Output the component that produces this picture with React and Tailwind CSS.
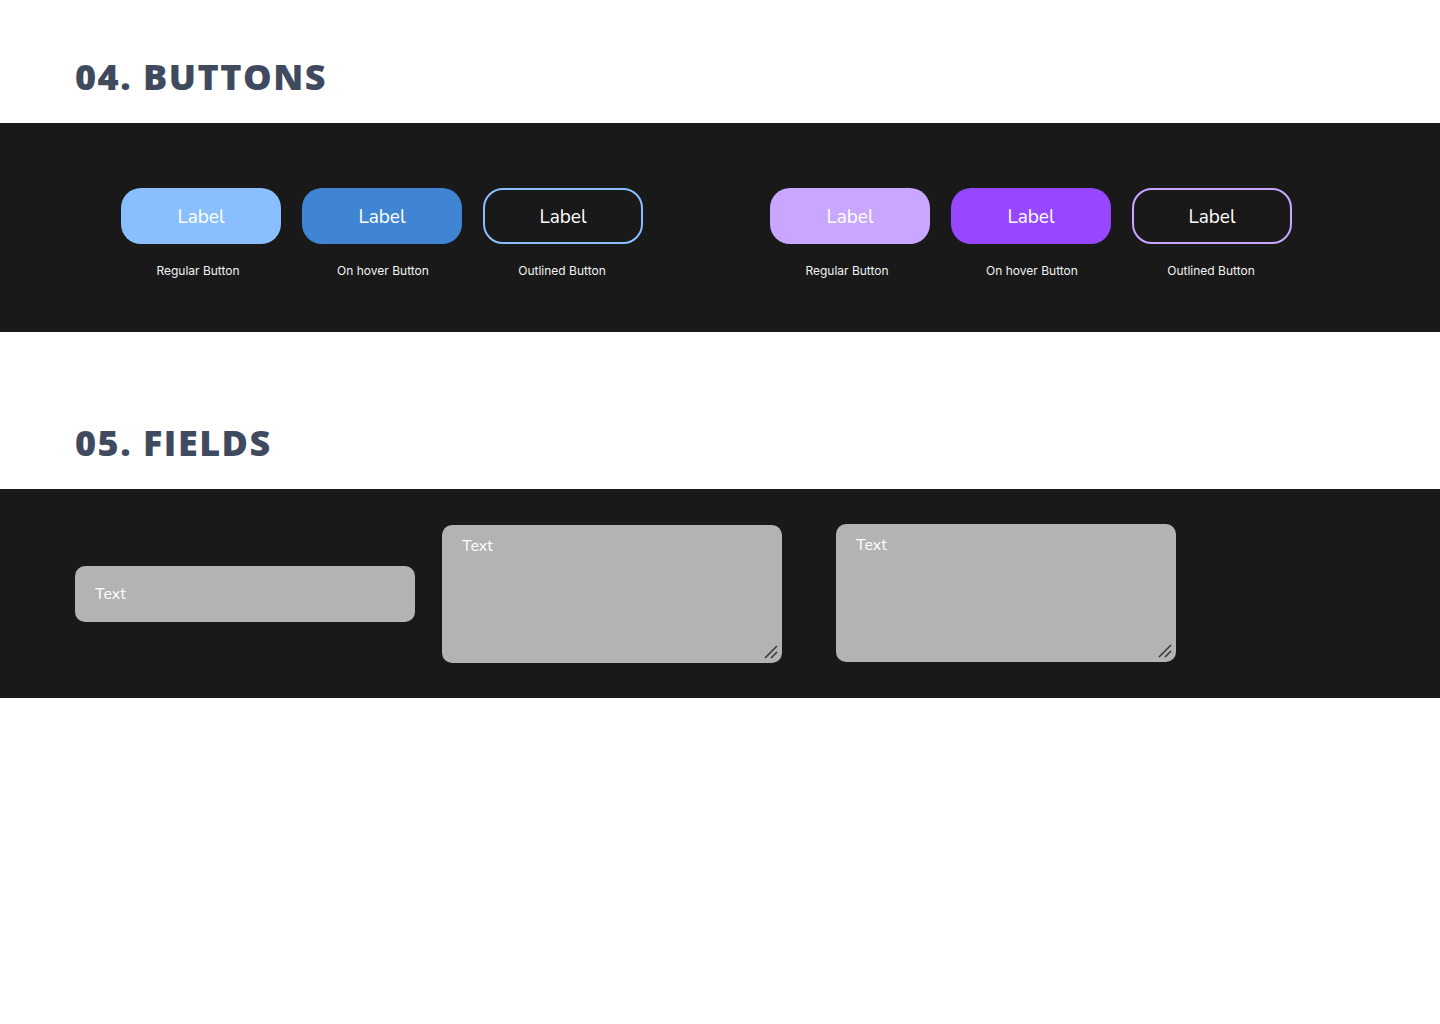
import React from 'react';

const heading = { fontFamily: '"Open Sans", "DejaVu Sans", sans-serif' };
const labelFont = { fontFamily: '"Nunito", "Lato", "Noto Sans", sans-serif' };
const captionFont = { fontFamily: 'Inter, "Noto Sans", sans-serif' };

const ButtonDemo = ({ variant, caption, shift = '' }) => {
  const styles = {
    blueRegular: 'bg-[#89bfff] text-white',
    blueHover: 'bg-[#4085d4] text-white',
    blueOutline: 'border-2 border-[#89bfff] text-white',
    purpleRegular: 'bg-[#c9a6ff] text-white',
    purpleHover: 'bg-[#9747ff] text-white',
    purpleOutline: 'border-2 border-[#c9a6ff] text-white',
  };
  return (
    <div className="flex flex-col items-center w-[160px]">
      <button
        className={`${styles[variant]} w-[160px] h-[56px] rounded-[20px] text-[19px] pt-[2px] flex items-center justify-center`}
        style={labelFont}
      >
        Label
      </button>
      <span className={`mt-[20px] text-[12px] leading-[14px] text-[#f2f2f2] ${shift}`} style={captionFont}>
        {caption}
      </span>
    </div>
  );
};

const ResizeGrip = () => (
  <svg className="absolute right-[4px] bottom-[4px]" width="14" height="14" viewBox="0 0 14 14">
    <line x1="1" y1="13" x2="13" y2="1" stroke="#3a3a3a" strokeWidth="1.6" />
    <line x1="7" y1="13" x2="13" y2="7" stroke="#3a3a3a" strokeWidth="1.6" />
  </svg>
);

const TextArea = ({ offset }) => (
  <div className={offset}>
    <div className="relative w-[340px] h-[138px] rounded-[10px] bg-[#b3b3b3] px-[20px] pt-[8px]">
      <span className="text-white text-[16px]" style={labelFont}>Text</span>
      <ResizeGrip />
    </div>
  </div>
);

const App = () => {
  return (
    <div className="w-[1440px] min-h-[1024px] bg-white">
      {/* Buttons */}
      <div className="h-[123px] px-[75px] flex items-end pb-[26px]">
        <h1 className="text-[36px] leading-[40px] font-extrabold text-[#3f4a5f] tracking-[1.5px]" style={heading}>
          04. BUTTONS
        </h1>
      </div>
      <div className="h-[209px] bg-[#191919] flex pt-[65px] pl-[121px]">
        <div className="flex gap-[21px]">
          <ButtonDemo variant="blueRegular" caption="Regular Button" shift="pr-[6px]" />
          <ButtonDemo variant="blueHover" caption="On hover Button" shift="pl-[2px]" />
          <ButtonDemo variant="blueOutline" caption="Outlined Button" shift="pr-[2px]" />
        </div>
        <div className="flex gap-[21px] ml-[127px]">
          <ButtonDemo variant="purpleRegular" caption="Regular Button" shift="pr-[6px]" />
          <ButtonDemo variant="purpleHover" caption="On hover Button" shift="pl-[2px]" />
          <ButtonDemo variant="purpleOutline" caption="Outlined Button" shift="pr-[2px]" />
        </div>
      </div>

      {/* Fields */}
      <div className="h-[157px] px-[75px] flex items-end pb-[26px]">
        <h1 className="text-[36px] leading-[40px] font-extrabold text-[#3f4a5f] tracking-[1.5px]" style={heading}>
          05. FIELDS
        </h1>
      </div>
      <div className="h-[209px] bg-[#191919] flex items-start pl-[75px]">
        <div className="mt-[77px] w-[340px] h-[56px] rounded-[10px] bg-[#b3b3b3] flex items-center px-[20px]">
          <span className="text-white text-[16px]" style={labelFont}>Text</span>
        </div>
        <TextArea offset="ml-[27px] mt-[36px]" />
        <TextArea offset="ml-[54px] mt-[35px]" />
      </div>
    </div>
  );
};

export default App;
